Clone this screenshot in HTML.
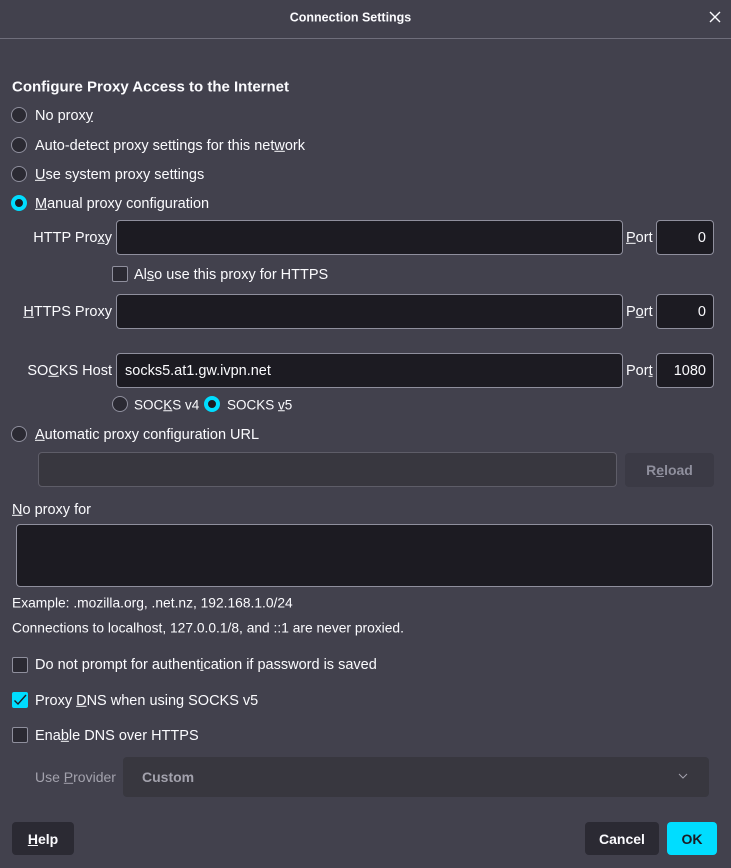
<!DOCTYPE html>
<html><head><meta charset="utf-8"><style>
*{box-sizing:border-box;margin:0;padding:0}
body{width:731px;height:868px;background:#42414d;color:#fbfbfe;font-family:"Liberation Sans",sans-serif;font-size:14.5px;position:relative;overflow:hidden}
.a{position:absolute;white-space:nowrap}
.t{transform:translateY(-45%)}
.rad{position:absolute;width:16px;height:16px;border-radius:50%;border:1px solid #8f8f9d;background:#2b2a33}
.rad.on{border:4px solid #00ddff;background:#1c1b22}
.cb{position:absolute;width:16px;height:16px;border-radius:2px;border:1px solid #8f8f9d;background:#2b2a33}
.in{position:absolute;background:#1c1b22;border:1px solid #8f8f9d;border-radius:4px}
.btn{position:absolute;background:#2b2a33;border-radius:4px;font-weight:bold;display:flex;align-items:center;justify-content:center;font-size:14px}
u{text-decoration:underline}
</style></head><body>
<div class="a t" style="left:0;width:701px;text-align:center;top:17px;font-weight:bold;font-size:12.5px">Connection Settings</div>
<svg class="a" style="left:709px;top:11px" width="12" height="12" viewBox="0 0 12 12"><path d="M1 1L11 11M11 1L1 11" stroke="#fbfbfe" stroke-width="1.4"/></svg>
<div class="a" style="left:0;top:38px;width:731px;height:1px;background:#6f6e7b"></div>
<div class="a t" style="left:12px;top:86px;font-weight:bold;font-size:15px">Configure Proxy Access to the Internet</div>

<div class="rad" style="left:11px;top:107px"></div><div class="a t" style="left:35px;top:115px">No prox<u>y</u></div>
<div class="rad" style="left:11px;top:137px"></div><div class="a t" style="left:35px;top:145px">Auto-detect proxy settings for this net<u>w</u>ork</div>
<div class="rad" style="left:11px;top:166px"></div><div class="a t" style="left:35px;top:174px"><u>U</u>se system proxy settings</div>
<div class="rad on" style="left:11px;top:195px"></div><div class="a t" style="left:35px;top:203px"><u>M</u>anual proxy configuration</div>

<div class="a t" style="right:619px;top:237px">HTTP Pro<u>x</u>y</div>
<div class="in" style="left:116px;top:220px;width:507px;height:35px"></div>
<div class="a t" style="left:626px;top:237px"><u>P</u>ort</div>
<div class="in" style="left:656px;top:220px;width:58px;height:35px"></div>
<div class="a t" style="right:25px;top:237px">0</div>

<div class="cb" style="left:112px;top:266px"></div><div class="a t" style="left:134px;top:274px">Al<u>s</u>o use this proxy for HTTPS</div>

<div class="a t" style="right:619px;top:311px"><u>H</u>TTPS Proxy</div>
<div class="in" style="left:116px;top:294px;width:507px;height:35px"></div>
<div class="a t" style="left:626px;top:311px">P<u>o</u>rt</div>
<div class="in" style="left:656px;top:294px;width:58px;height:35px"></div>
<div class="a t" style="right:25px;top:311px">0</div>

<div class="a t" style="right:619px;top:370px">SO<u>C</u>KS Host</div>
<div class="in" style="left:116px;top:353px;width:507px;height:35px"></div>
<div class="a t" style="left:125px;top:370px">socks5.at1.gw.ivpn.net</div>
<div class="a t" style="left:626px;top:370px">Por<u>t</u></div>
<div class="in" style="left:656px;top:353px;width:58px;height:35px"></div>
<div class="a t" style="right:25px;top:370px">1080</div>

<div class="rad" style="left:112px;top:396px"></div><div class="a t" style="left:134px;top:404px;font-size:13.5px">SOC<u>K</u>S v4</div>
<div class="rad on" style="left:204px;top:396px"></div><div class="a t" style="left:227px;top:404px;font-size:13.5px">SOCKS <u>v</u>5</div>

<div class="rad" style="left:11px;top:426px"></div><div class="a t" style="left:35px;top:434px"><u>A</u>utomatic proxy configuration URL</div>
<div class="a" style="left:38px;top:452px;width:579px;height:35px;background:#38373f;border:1px solid #5e5d68;border-radius:4px"></div>
<div class="btn" style="left:625px;top:453px;width:89px;height:34px;background:#3b3a45;color:#8f8f9d">R<u>e</u>load</div>

<div class="a t" style="left:12px;top:509px"><u>N</u>o proxy for</div>
<div class="in" style="left:16px;top:524px;width:697px;height:63px"></div>
<div class="a t" style="left:12px;top:602px;font-size:13.8px">Example: .mozilla.org, .net.nz, 192.168.1.0/24</div>
<div class="a t" style="left:12px;top:627px;font-size:13.8px">Connections to localhost, 127.0.0.1/8, and ::1 are never proxied.</div>

<div class="cb" style="left:12px;top:657px"></div><div class="a t" style="left:35px;top:664px">Do not prompt for authent<u>i</u>cation if password is saved</div>
<div class="cb" style="left:12px;top:692px;background:#00ddff;border-color:#00ddff"></div>
<svg class="a" style="left:12px;top:692px" width="16" height="16" viewBox="0 0 16 16"><path d="M2.5 8.5L6 12L14 3" fill="none" stroke="#1c1b22" stroke-width="1.4"/></svg>
<div class="a t" style="left:35px;top:700px">Proxy <u>D</u>NS when using SOCKS v5</div>
<div class="cb" style="left:12px;top:727px"></div><div class="a t" style="left:35px;top:735px">Ena<u>b</u>le DNS over HTTPS</div>

<div class="a t" style="left:35px;top:776px;color:#a3a2ad;font-size:14px">Use <u>P</u>rovider</div>
<div class="a" style="left:123px;top:757px;width:586px;height:40px;background:#38373f;border-radius:4px"></div>
<div class="a t" style="left:142px;top:776px;color:#a3a2ad;font-weight:bold;font-size:14px">Custom</div>
<svg class="a" style="left:678px;top:773px" width="10" height="6" viewBox="0 0 10 6"><path d="M1 1L5 5L9 1" fill="none" stroke="#a3a2ad" stroke-width="1"/></svg>

<div class="btn" style="left:12px;top:822px;width:62px;height:33px"><u>H</u>elp</div>
<div class="btn" style="left:585px;top:822px;width:74px;height:33px">Cancel</div>
<div class="btn" style="left:667px;top:822px;width:50px;height:33px;background:#00ddff;color:#1c1b22">OK</div>
</body></html>
